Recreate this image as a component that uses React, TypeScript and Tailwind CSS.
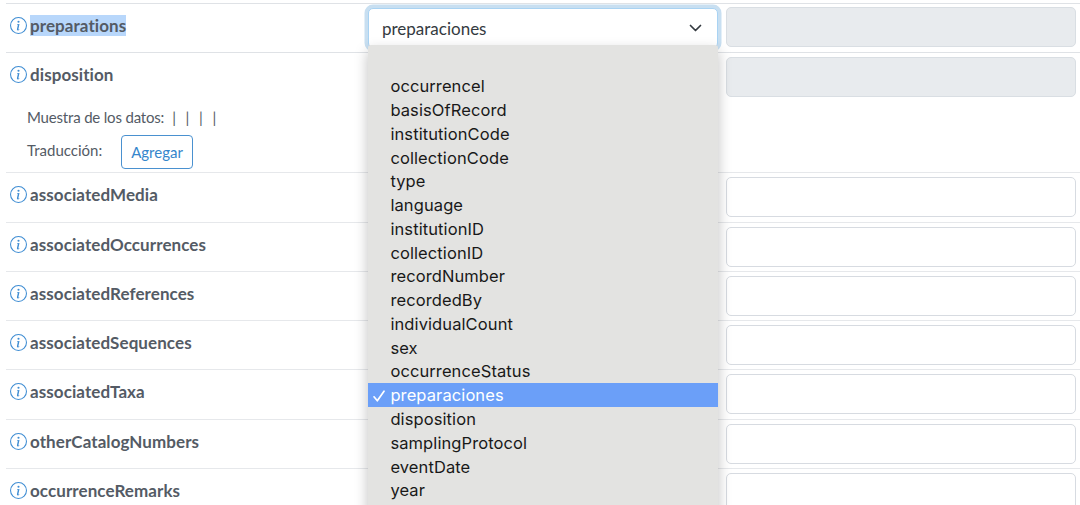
import { BsInfoCircle } from "react-icons/bs";

const remaining = [
  "associatedMedia",
  "associatedOccurrences",
  "associatedReferences",
  "associatedSequences",
  "associatedTaxa",
  "otherCatalogNumbers",
  "occurrenceRemarks",
];

const options = [
  "",
  "occurrencel",
  "basisOfRecord",
  "institutionCode",
  "collectionCode",
  "type",
  "language",
  "institutionID",
  "collectionID",
  "recordNumber",
  "recordedBy",
  "individualCount",
  "sex",
  "occurrenceStatus",
  "preparaciones",
  "disposition",
  "samplingProtocol",
  "eventDate",
  "year",
];

function Label({ text, selected = false }: { text: string; selected?: boolean }) {
  return (
    <div className="flex h-[21px] items-center gap-[3px] pl-1">
      <BsInfoCircle className="size-[17px] shrink-0 text-[#3f8dd3]" />
      <span
        className={`h-[21px] text-[17px] leading-[22px] font-bold tracking-[0.08px] whitespace-nowrap ${
          selected ? "bg-[#b8d7fb]" : ""
        }`}
      >
        {text}
      </span>
    </div>
  );
}

function Field({ disabled = false }: { disabled?: boolean }) {
  return (
    <div
      className={`h-10 w-[350px] rounded-[5px] border ${
        disabled ? "border-[#d9dee3] bg-[#e8ebee]" : "border-[#d7dbe1] bg-white"
      }`}
    />
  );
}

function OptionList() {
  return (
    <div className="absolute top-[41px] left-0 z-10 h-[480px] w-[350px] rounded-t-[3px] bg-[#e3e3e1] pt-[5.5px] shadow-[0_6px_14px_rgba(0,0,0,0.25)]">
      {options.map((option) => {
        const active = option === "preparaciones";
        return (
          <div
            key={option}
            className={`flex h-[23.78px] items-center pt-px font-[Inter,sans-serif] text-[16.5px] tracking-[0.1px] ${
              active ? "bg-[#6b9ff8] text-white" : "text-[#191919]"
            }`}
          >
            <span className="flex w-[22.4px] shrink-0 justify-center">
              {active && (
                <svg className="h-3 w-3" viewBox="0 0 12 12" fill="none" stroke="currentColor" strokeWidth="1.7" strokeLinecap="round" strokeLinejoin="round">
                  <path d="M1 6.8 4.3 10.8 11 1.2" />
                </svg>
              )}
            </span>
            {option}
          </div>
        );
      })}
    </div>
  );
}

export default function App() {
  return (
    <div className="h-[505px] w-[1080px] overflow-hidden bg-white pt-[3px] pl-1.5 font-[Lato,sans-serif] text-[#545b65]">
      <div className="grid h-[49.2px] grid-cols-[362px_358px_1fr] border-t border-[#dfe2e6]">
        <div className="pt-[11px]">
          <Label text="preparations" selected />
        </div>
        <div className="relative">
          <div className="mt-[4px] flex h-[40px] w-[350px] items-center justify-between rounded-[5px] border border-[#a9d3f3] bg-white pr-[15px] pl-[13px] text-[17px] text-[#343a40] shadow-[0_0_0_3.5px_#c8dff1]">
            <span className="pt-px">preparaciones</span>
            <svg className="h-3 w-[13px]" viewBox="0 0 13 12" fill="none" stroke="currentColor" strokeWidth="1.7" strokeLinecap="round" strokeLinejoin="round">
              <path d="M1.5 3.5 6.5 8.5 11.5 3.5" />
            </svg>
          </div>
          <OptionList />
        </div>
        <div className="pt-[3px]">
          <Field disabled />
        </div>
      </div>

      <div className="grid h-[120.3px] grid-cols-[362px_358px_1fr] border-t border-[#dfe2e6]">
        <div className="pt-[11px]">
          <Label text="disposition" />
          <div className="mt-5 flex h-6 items-center pl-[21px] text-[15px]">
            <span className="tracking-[-0.18px]">Muestra de los datos:</span>
            <span className="ml-2 flex w-[44px] justify-between">
              <span>|</span><span>|</span><span>|</span><span>|</span>
            </span>
          </div>
          <div className="mt-[6px] flex items-start pl-[21px] text-[15px]">
            <span className="w-[94px] pt-[4px]">Traducción:</span>
            <button className="h-[34px] w-[72px] rounded-[4px] border border-[#4a91d0] text-[15px] text-[#3586cc]">
              Agregar
            </button>
          </div>
        </div>
        <div />
        <div className="pt-1">
          <Field disabled />
        </div>
      </div>

      {remaining.map((name) => (
        <div key={name} className="grid h-[49.25px] grid-cols-[362px_358px_1fr] border-t border-[#e6e8eb]">
          <div className="pt-[11px]">
            <Label text={name} />
          </div>
          <div />
          <div className="pt-1">
            <Field />
          </div>
        </div>
      ))}
    </div>
  );
}
